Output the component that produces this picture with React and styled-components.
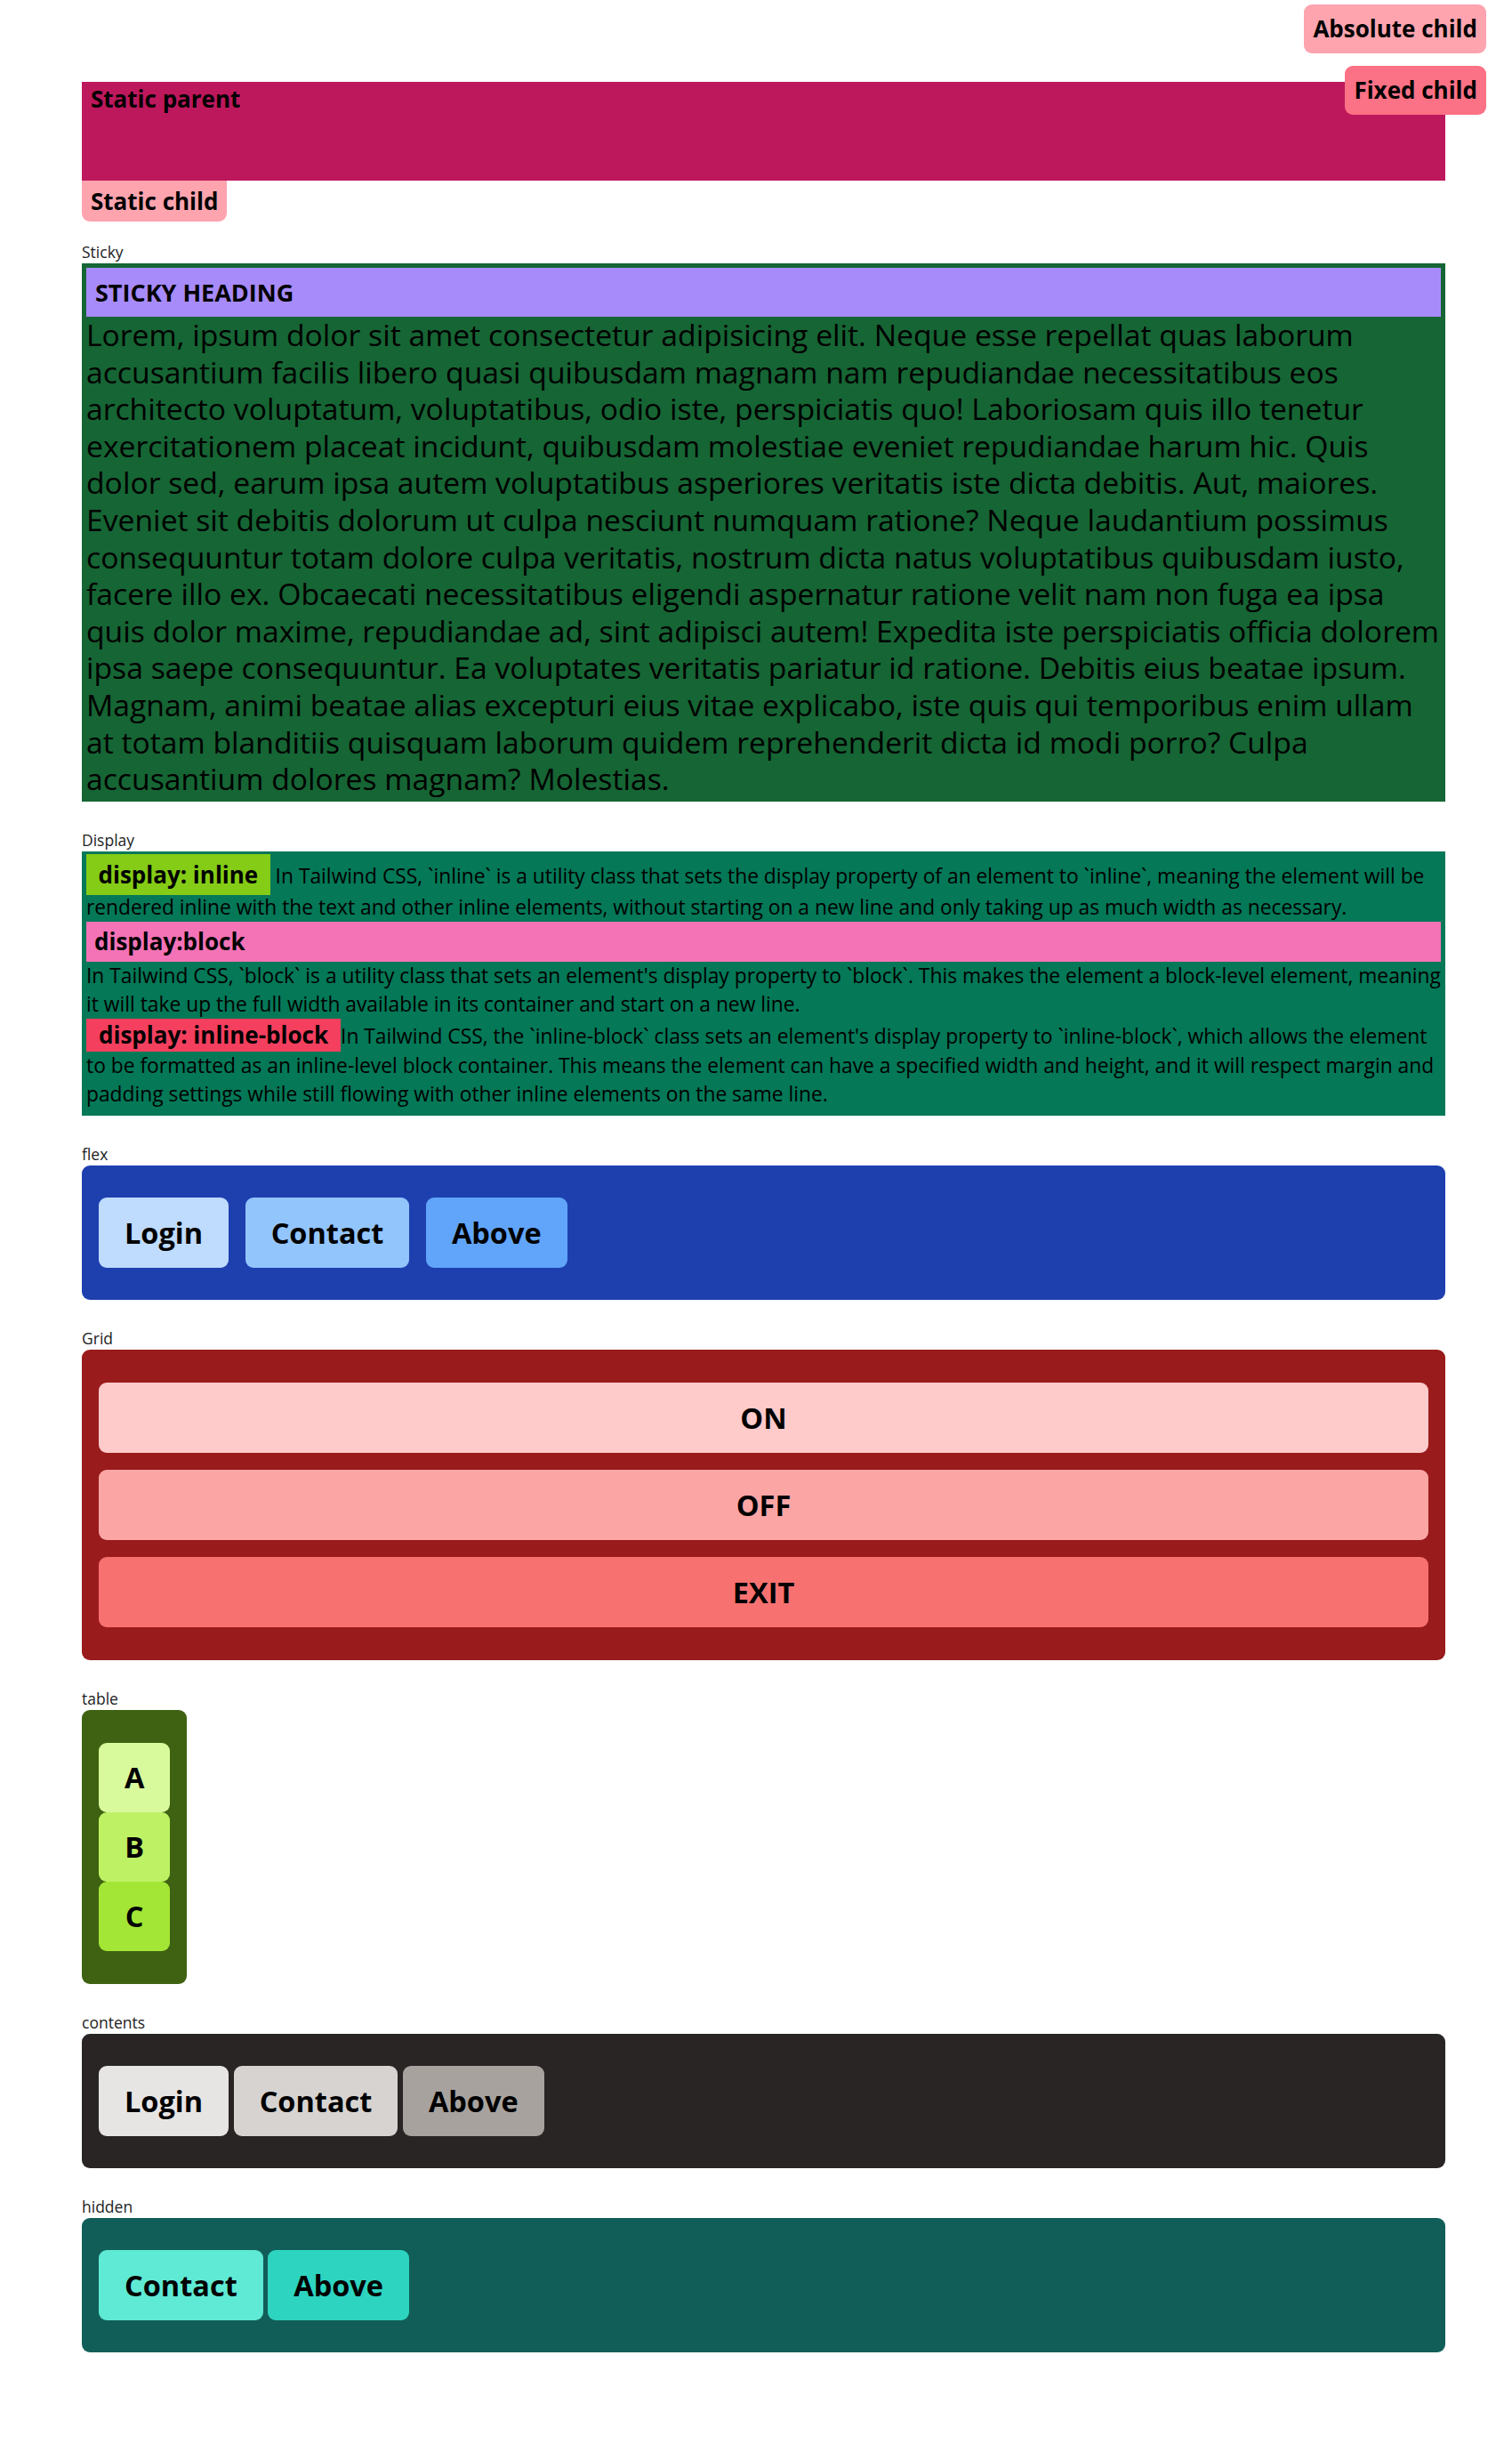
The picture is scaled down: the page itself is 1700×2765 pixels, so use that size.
import styled, { createGlobalStyle } from 'styled-components';

const GlobalStyle = createGlobalStyle`
  body {
    margin: 0;
    padding: 0;
    font-family: 'Open Sans', 'Noto Sans', sans-serif;
    background-color: #fff;
    color: #000;
  }
`;

const Page = styled.div`
  position: relative;
  padding: 92px 75px 120px 92px;
`;

const StaticParent = styled.div`
  height: 111px;
  padding: 0 10px;
  background-color: #be185d;
  font-size: 26px;
  font-weight: 700;
  line-height: 38px;
  box-sizing: border-box;
`;

const StaticChild = styled.div`
  width: fit-content;
  padding: 0 10px;
  background-color: #fda4af;
  border-radius: 0 0 9px 9px;
  font-size: 26px;
  font-weight: 700;
  line-height: 46px;
`;

const FloatingChild = styled.div`
  position: ${(p) => (p.$fixed ? 'fixed' : 'absolute')};
  top: ${(p) => (p.$fixed ? '74px' : '5px')};
  right: 29px;
  padding: 0 10px;
  background-color: ${(p) => (p.$fixed ? '#fb7185' : '#fda4af')};
  border-radius: 9px;
  font-size: 26px;
  font-weight: 700;
  line-height: 55px;
  z-index: 10;
`;

const Section = styled.section`
  margin-top: ${(p) => p.$gap || 31}px;
`;

const Label = styled.div`
  font-size: 17.5px;
  line-height: 25px;
  color: #222;
`;

const StickyBox = styled.div`
  padding: 5px 5px 4px;
  background-color: #166534;
`;

const StickyHeading = styled.h2`
  position: sticky;
  top: 0;
  margin: 0;
  padding: 0 10px;
  background-color: #a78bfa;
  font-size: 27px;
  font-weight: 700;
  line-height: 55px;
`;

const Lorem = styled.p`
  margin: 0;
  font-size: 33.7px;
  line-height: 41.6px;
`;

const DisplayBox = styled.div`
  padding: 5px 5px 8px;
  background-color: #047857;
  font-size: 22.8px;
  line-height: 32px;
`;

const InlineTag = styled.span`
  padding: 5px 13.5px;
  background-color: #84cc16;
  font-size: 26px;
  font-weight: 700;
  line-height: 42px;
`;

const BlockTag = styled.div`
  padding: 0 9px;
  background-color: #f472b6;
  font-size: 26px;
  font-weight: 700;
  line-height: 45px;
`;

const InlineBlockTag = styled.span`
  display: inline-block;
  padding: 0 14px;
  background-color: #f43f5e;
  font-size: 26px;
  font-weight: 700;
  line-height: 37px;
`;

const Panel = styled.div`
  width: ${(p) => (p.$fit ? 'fit-content' : 'auto')};
  padding: 36px 19px;
  border-radius: 9px;
  background-color: ${(p) => p.$bg};
`;

const FlexRow = styled.div`
  display: flex;
  gap: ${(p) => p.$gap}px;
`;

const GridCol = styled.div`
  display: grid;
  grid-template-columns: 1fr;
  gap: 19px;
  padding: 1px 0;
`;

const Btn = styled.div`
  padding: 15px 29px;
  border-radius: 9px;
  background-color: ${(p) => p.$bg};
  font-size: 32.5px;
  font-weight: 700;
  line-height: 49px;
  text-align: center;
`;

const Table = styled.div`
  display: table;
  padding: 1px 0;
`;

const TableRow = styled.div`
  display: table-row;
`;

const TableCell = styled.div`
  display: table-cell;
  padding: 14.5px 29px;
  border-radius: 9px;
  background-color: ${(p) => p.$bg};
  font-size: 32.5px;
  font-weight: 700;
  line-height: 49px;
  text-align: center;
`;

const lorem =
  'Lorem, ipsum dolor sit amet consectetur adipisicing elit. Neque esse repellat quas laborum accusantium facilis libero quasi quibusdam magnam nam repudiandae necessitatibus eos architecto voluptatum, voluptatibus, odio iste, perspiciatis quo! Laboriosam quis illo tenetur exercitationem placeat incidunt, quibusdam molestiae eveniet repudiandae harum hic. Quis dolor sed, earum ipsa autem voluptatibus asperiores veritatis iste dicta debitis. Aut, maiores. Eveniet sit debitis dolorum ut culpa nesciunt numquam ratione? Neque laudantium possimus consequuntur totam dolore culpa veritatis, nostrum dicta natus voluptatibus quibusdam iusto, facere illo ex. Obcaecati necessitatibus eligendi aspernatur ratione velit nam non fuga ea ipsa quis dolor maxime, repudiandae ad, sint adipisci autem! Expedita iste perspiciatis officia dolorem ipsa saepe consequuntur. Ea voluptates veritatis pariatur id ratione. Debitis eius beatae ipsum. Magnam, animi beatae alias excepturi eius vitae explicabo, iste quis qui temporibus enim ullam at totam blanditiis quisquam laborum quidem reprehenderit dicta id modi porro? Culpa accusantium dolores magnam? Molestias.';

const navButtons = [
  { label: 'Login', blue: '#bfdbfe', stone: '#e7e5e4' },
  { label: 'Contact', blue: '#93c5fd', stone: '#d6d3d1', teal: '#5eead4' },
  { label: 'Above', blue: '#60a5fa', stone: '#a8a29e', teal: '#2dd4bf' },
];

const gridRows = [
  { label: 'ON', bg: '#fecaca' },
  { label: 'OFF', bg: '#fca5a5' },
  { label: 'EXIT', bg: '#f87171' },
];

const tableRows = [
  { label: 'A', bg: '#d9f99d' },
  { label: 'B', bg: '#bef264' },
  { label: 'C', bg: '#a3e635' },
];

export default function App() {
  return (
    <Page>
      <GlobalStyle />
      <StaticParent>Static parent</StaticParent>
      <StaticChild>Static child</StaticChild>
      <FloatingChild>Absolute child</FloatingChild>
      <FloatingChild $fixed>Fixed child</FloatingChild>

      <Section $gap={22}>
        <Label>Sticky</Label>
        <StickyBox>
          <StickyHeading>STICKY HEADING</StickyHeading>
          <Lorem>{lorem}</Lorem>
        </StickyBox>
      </Section>

      <Section>
        <Label>Display</Label>
        <DisplayBox>
          <InlineTag>display: inline</InlineTag> In Tailwind CSS, `inline` is a utility class that sets the
          display property of an element to `inline`, meaning the element will be rendered inline with the
          text and other inline elements, without starting on a new line and only taking up as much width as
          necessary.
          <BlockTag>display:block</BlockTag>
          In Tailwind CSS, `block` is a utility class that sets an element's display property to `block`. This
          makes the element a block-level element, meaning it will take up the full width available in its
          container and start on a new line.
          <div>
            <InlineBlockTag>display: inline-block</InlineBlockTag>In Tailwind CSS, the `inline-block` class
            sets an element's display property to `inline-block`, which allows the element to be formatted as
            an inline-level block container. This means the element can have a specified width and height, and
            it will respect margin and padding settings while still flowing with other inline elements on the
            same line.
          </div>
        </DisplayBox>
      </Section>

      <Section>
        <Label>flex</Label>
        <Panel $bg="#1e40af">
          <FlexRow $gap={18.5}>
            {navButtons.map((b) => (
              <Btn key={b.label} $bg={b.blue}>
                {b.label}
              </Btn>
            ))}
          </FlexRow>
        </Panel>
      </Section>

      <Section>
        <Label>Grid</Label>
        <Panel $bg="#991b1b">
          <GridCol>
            {gridRows.map((r) => (
              <Btn key={r.label} $bg={r.bg}>
                {r.label}
              </Btn>
            ))}
          </GridCol>
        </Panel>
      </Section>

      <Section>
        <Label>table</Label>
        <Panel $fit $bg="#3f6212">
          <Table>
            {tableRows.map((r) => (
              <TableRow key={r.label}>
                <TableCell $bg={r.bg}>{r.label}</TableCell>
              </TableRow>
            ))}
          </Table>
        </Panel>
      </Section>

      <Section>
        <Label>contents</Label>
        <Panel $bg="#292524">
          <FlexRow $gap={5.5}>
            {navButtons.map((b) => (
              <Btn key={b.label} $bg={b.stone}>
                {b.label}
              </Btn>
            ))}
          </FlexRow>
        </Panel>
      </Section>

      <Section>
        <Label>hidden</Label>
        <Panel $bg="#115e59">
          <FlexRow $gap={5.5}>
            {navButtons
              .filter((b) => b.teal)
              .map((b) => (
                <Btn key={b.label} $bg={b.teal}>
                  {b.label}
                </Btn>
              ))}
          </FlexRow>
        </Panel>
      </Section>
    </Page>
  );
}
